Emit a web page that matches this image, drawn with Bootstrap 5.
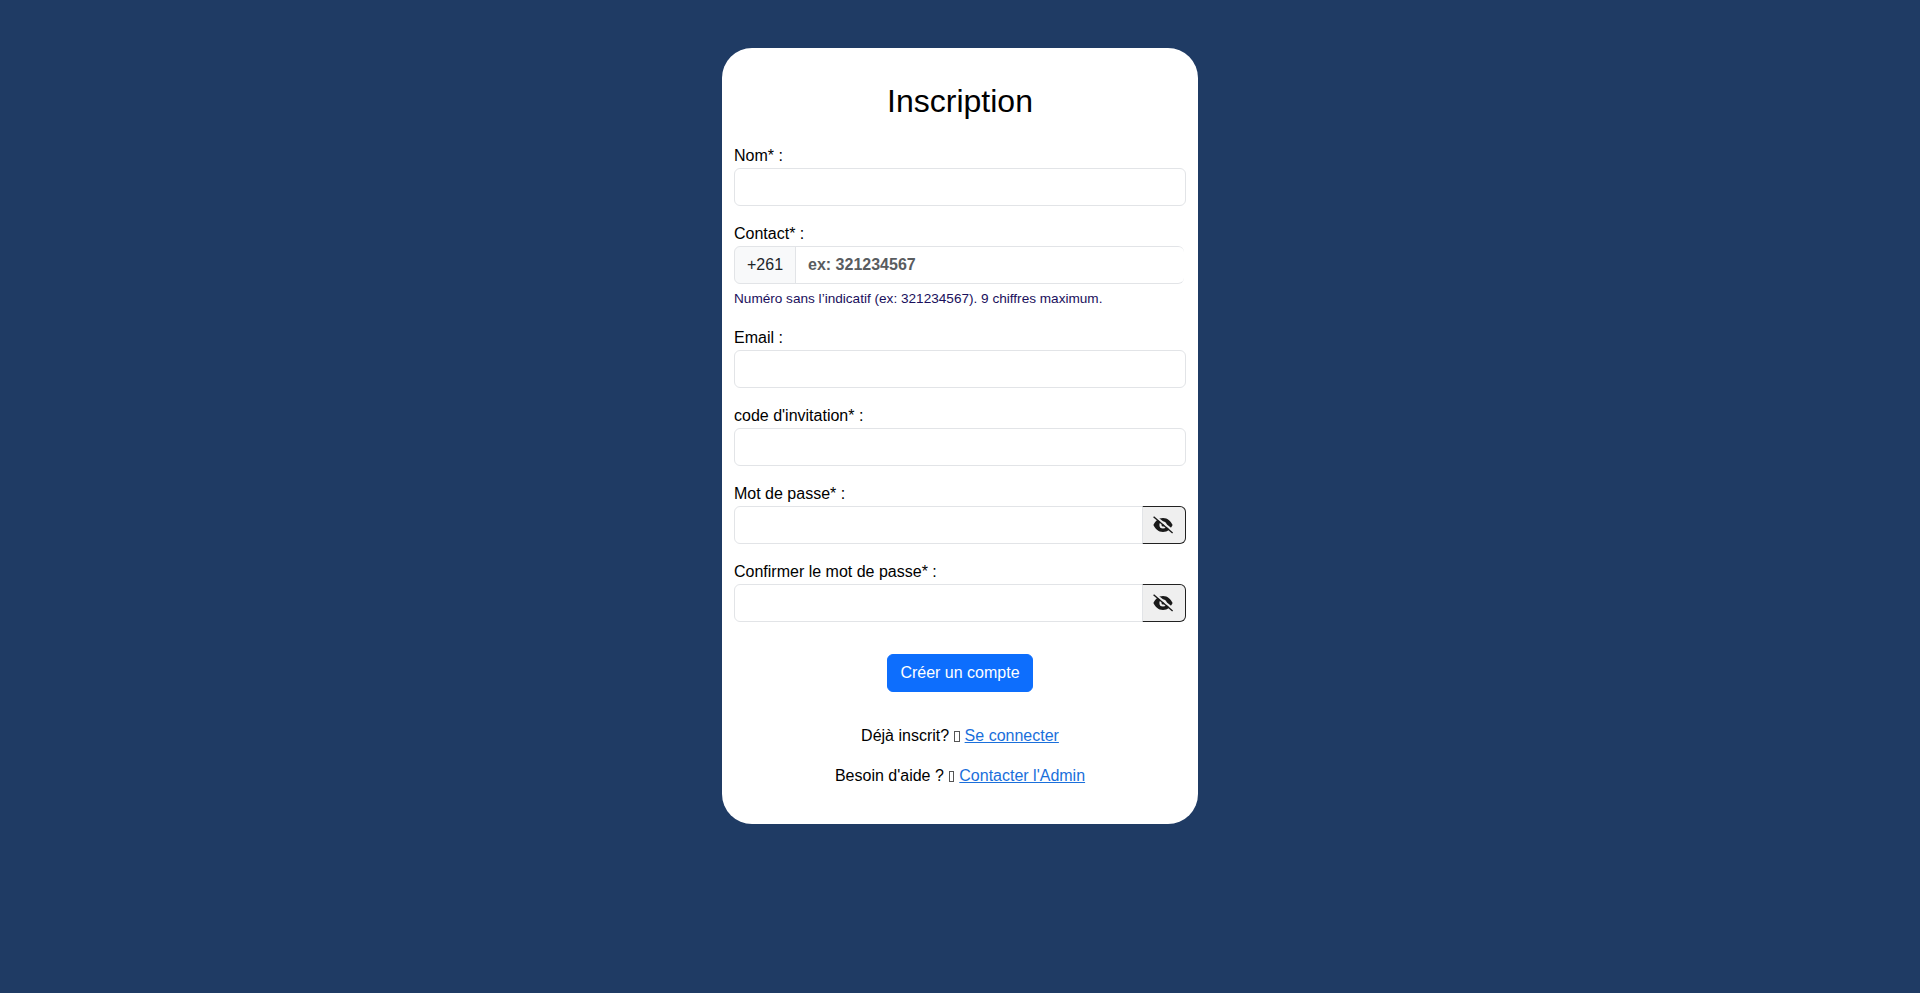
<!DOCTYPE html>
<html lang="fr">
<head>
<meta charset="utf-8">
<title>Inscription</title>
<link href="https://cdn.jsdelivr.net/npm/bootstrap@5.3.0/dist/css/bootstrap.min.css" rel="stylesheet">
<style>
body { background: #1f3b64; font-family: "Liberation Sans", Arial, sans-serif; color: #000; min-height: 993px; }
.signup-box { width: 476px; margin-top: 48px; padding: 34px 12px 20px; background: #fff; border-radius: 30px; }
.signup-title { font-size: 32px; line-height: 38.4px; font-weight: 400; margin-bottom: 24px; }
.signup-label { display: block; margin: 0; line-height: 24px; }
.signup-input { height: 38px; border-color: #e2e4e7; font-family: inherit; }
.signup-input::placeholder { font-weight: 700; color: #595c5f; }
.phone-group { padding-right: 2px; }
.phone-input { border-right: 0; }
.phone-prefix { background: #f8f9fa; color: #212529; border-color: #e2e4e7; }
.help-note { font-size: 13.6px; color: #1a0f5c; margin: 5px 0 0; line-height: 20.4px; }
.eye-toggle { width: 44px; height: 38px; padding: 0 2px 0 0; background: #efefef; border: 1px solid #222; border-left: 0; border-radius: 0 6px 6px 0; display: flex; align-items: center; justify-content: center; }
.eye-toggle:hover { background: #efefef; }
.signup-submit { height: 38px; margin: 16px 0 32px; }
.signup-box a { color: #1a6fdb; }
.hint-line { margin-bottom: 16px; line-height: 24px; }
.missing-glyph { display: inline-block; width: 5.4px; height: 11px; margin: 0 .6px; border: 1px solid #555; vertical-align: -1.5px; }
</style>
</head>
<body>
<div class="d-flex justify-content-center">
  <div class="signup-box">
    <h1 class="signup-title text-center">Inscription</h1>
    <form>
      <div class="mb-3">
        <label class="signup-label">Nom* :</label>
        <input type="text" class="form-control signup-input">
      </div>
      <div class="mb-3">
        <label class="signup-label">Contact* :</label>
        <div class="input-group phone-group">
          <span class="input-group-text phone-prefix">+261</span>
          <input type="tel" class="form-control signup-input phone-input" placeholder="ex: 321234567">
        </div>
        <p class="help-note">Numéro sans l’indicatif (ex: 321234567). 9 chiffres maximum.</p>
      </div>
      <div class="mb-3">
        <label class="signup-label">Email :</label>
        <input type="email" class="form-control signup-input">
      </div>
      <div class="mb-3">
        <label class="signup-label">code d'invitation* :</label>
        <input type="text" class="form-control signup-input">
      </div>
      <div class="mb-3">
        <label class="signup-label">Mot de passe* :</label>
        <div class="input-group">
          <input type="password" class="form-control signup-input">
          <button type="button" class="eye-toggle"><svg width="22" height="20" viewBox="0 0 22 20" aria-hidden="true"><path d="M11 3C6.200 3 3 6.400 1.400 10c1.600 3.600 4.800 7 9.600 7s8-3.400 9.600-7C19 6.400 15.800 3 11 3zm0 3.400a3.600 3.600 0 1 1 0 7.200 3.600 3.600 0 0 1 0-7.200z" fill="#1a1a1a" fill-rule="evenodd"/><circle cx="11" cy="10" r="1.500" fill="#1a1a1a"/><path d="M2 2.600 20 17" stroke="#efefef" stroke-width="2.200" transform="translate(.8 -1.400)"/><path d="M1.600 1.800 20.600 18" stroke="#1a1a1a" stroke-width="1.400"/></svg></button>
        </div>
      </div>
      <div class="mb-3">
        <label class="signup-label">Confirmer le mot de passe* :</label>
        <div class="input-group">
          <input type="password" class="form-control signup-input">
          <button type="button" class="eye-toggle"><svg width="22" height="20" viewBox="0 0 22 20" aria-hidden="true"><path d="M11 3C6.200 3 3 6.400 1.400 10c1.600 3.600 4.800 7 9.600 7s8-3.400 9.600-7C19 6.400 15.800 3 11 3zm0 3.400a3.600 3.600 0 1 1 0 7.200 3.600 3.600 0 0 1 0-7.200z" fill="#1a1a1a" fill-rule="evenodd"/><circle cx="11" cy="10" r="1.500" fill="#1a1a1a"/><path d="M2 2.600 20 17" stroke="#efefef" stroke-width="2.200" transform="translate(.8 -1.400)"/><path d="M1.600 1.800 20.600 18" stroke="#1a1a1a" stroke-width="1.400"/></svg></button>
        </div>
      </div>
      <div class="text-center">
        <button type="button" class="btn btn-primary signup-submit">Créer un compte</button>
      </div>
    </form>
    <p class="hint-line text-center">Déjà inscrit? <span class="missing-glyph"></span> <a href="#">Se connecter</a></p>
    <p class="hint-line text-center">Besoin d'aide ? <span class="missing-glyph"></span> <a href="#">Contacter l'Admin</a></p>
  </div>
</div>
<script src="https://cdn.jsdelivr.net/npm/bootstrap@5.3.0/dist/js/bootstrap.bundle.min.js"></script>
</body>
</html>
